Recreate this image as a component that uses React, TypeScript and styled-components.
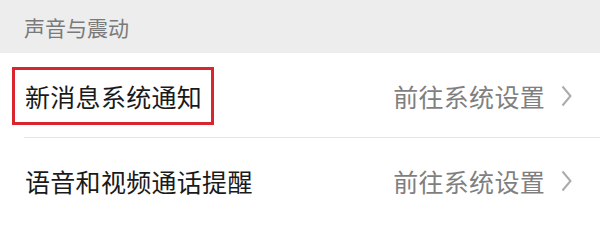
import React from "react";
import styled, { createGlobalStyle } from "styled-components";

const Global = createGlobalStyle`
  html, body { margin: 0; padding: 0; background: #ffffff; }
  body { font-family: "Noto Sans CJK SC", "Noto Sans", sans-serif; }
`;

const Page = styled.div`
  width: 600px;
  height: 238px;
  background: #ffffff;
  display: flex;
  flex-direction: column;
`;

const SectionHeader = styled.div`
  height: 53px;
  background: #ededed;
  display: flex;
  align-items: center;
  padding-left: 24px;
  font-size: 21px;
  color: #7a7a7a;
  box-sizing: border-box;
`;

const Row = styled.div<{ $divider?: boolean }>`
  height: ${(p) => (p.$divider ? 85 : 86)}px;
  display: flex;
  align-items: center;
  padding: 0 28px 0 25px;
  box-sizing: border-box;
  position: relative;
  ${(p) =>
    p.$divider &&
    `&::after {
      content: "";
      position: absolute;
      left: 24px;
      right: 0;
      bottom: 0;
      height: 1px;
      background: #e6e6e6;
    }`}
`;

const Title = styled.span<{ $highlight?: boolean }>`
  font-size: 25px;
  color: #1a1a1a;
  letter-spacing: 0.3px;
  position: relative;
  ${(p) =>
    p.$highlight &&
    `&::before {
      content: "";
      position: absolute;
      left: -13px;
      right: -12px;
      top: -11px;
      bottom: -11px;
      border: 3px solid #d9252e;
    }`}
`;

const Action = styled.div`
  margin-left: auto;
  display: flex;
  align-items: center;
  gap: 16px;
  font-size: 25px;
  color: #7f7f7f;
  letter-spacing: 0.3px;
`;

const Chevron = () => (
  <svg width="11" height="22" viewBox="0 0 11 22" style={{ display: "block" }}>
    <polyline points="1.5,1.5 9.5,11 1.5,20.5" fill="none" stroke="#ababab" strokeWidth="2" />
  </svg>
);

export default function App() {
  return (
    <>
      <Global />
      <Page>
        <SectionHeader>声音与震动</SectionHeader>
        <Row $divider>
          <Title $highlight>新消息系统通知</Title>
          <Action>
            前往系统设置
            <Chevron />
          </Action>
        </Row>
        <Row>
          <Title>语音和视频通话提醒</Title>
          <Action>
            前往系统设置
            <Chevron />
          </Action>
        </Row>
      </Page>
    </>
  );
}
